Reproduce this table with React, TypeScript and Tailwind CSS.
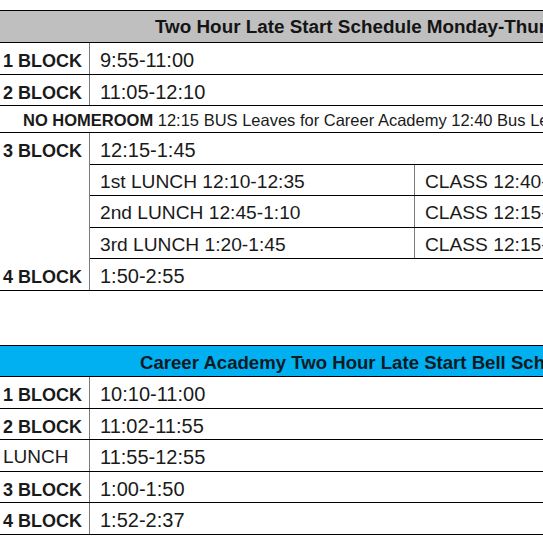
import React from "react";

const font = "font-['Liberation_Sans',Arial,sans-serif]";

function Row({ label, bold = true, time }: { label: string; bold?: boolean; time: string }) {
  return (
    <div className="flex h-[31.5px] border-b border-black">
      <div
        className={`w-[90px] shrink-0 border-r border-[#7a7a7a] pl-[3px] leading-[22px] whitespace-nowrap ${
          bold ? "font-bold text-[18px] pt-[7px]" : "text-[19px] pt-[6px]"
        }`}
      >
        {label}
      </div>
      <div className="pl-[10px] pt-[6px] leading-[22px] text-[20px] whitespace-nowrap">{time}</div>
    </div>
  );
}

function LunchRow({ a, b }: { a: string; b: string }) {
  return (
    <div className="flex h-[31.5px] border-b border-black">
      <div className="w-[325px] shrink-0 border-r border-[#7a7a7a] pl-[10px] pt-[6px] leading-[22px] text-[19.2px] whitespace-nowrap">
        {a}
      </div>
      <div className="pl-[10px] pt-[6px] leading-[22px] text-[19.2px] whitespace-nowrap">{b}</div>
    </div>
  );
}

export default function App() {
  return (
    <div className={`w-[543px] h-[543px] overflow-hidden bg-white text-[#1a1a1a] ${font}`}>
      <div className="pt-[10px]">
        {/* Table 1 */}
        <div className="border-t border-black w-[760px]">
          <div className="h-[32px] border-b border-black bg-[#bfbfbf] pl-[155px] pt-[5px] leading-[22px] text-[18.85px] font-bold whitespace-nowrap text-[#141414]">
            Two Hour Late Start Schedule Monday-Thursday
          </div>
          <Row label="1 BLOCK" time="9:55-11:00" />
          <Row label="2 BLOCK" time="11:05-12:10" />
          <div className="h-[27px] border-b border-black pl-[23px] pt-[5px] leading-[18px] text-[16.5px] whitespace-nowrap">
            <span className="font-bold">NO HOMEROOM</span> 12:15 BUS Leaves for Career Academy 12:40 Bus Leaves for Home
          </div>
          <div className="flex">
            <div className="w-[90px] shrink-0 border-r border-[#7a7a7a] pl-[3px] pt-[7px] leading-[22px] text-[18px] font-bold whitespace-nowrap">
              3 BLOCK
            </div>
            <div className="flex-1 flex flex-col">
              <div className="h-[31.5px] border-b border-black pl-[10px] pt-[6px] leading-[22px] text-[20px]">12:15-1:45</div>
              <LunchRow a="1st LUNCH 12:10-12:35" b="CLASS 12:40-1:45" />
              <LunchRow a="2nd LUNCH 12:45-1:10" b="CLASS 12:15-12:45" />
              <LunchRow a="3rd LUNCH 1:20-1:45" b="CLASS 12:15-1:20" />
            </div>
          </div>
          <Row label="4 BLOCK" time="1:50-2:55" />
        </div>

        {/* Table 2 */}
        <div className="mt-[54.5px] border-t border-black w-[760px]">
          <div className="h-[31px] border-b border-black bg-[#00b0f0] pl-[140px] pt-[6px] leading-[22px] text-[18.6px] font-bold whitespace-nowrap text-[#0f1a24]">
            Career Academy Two Hour Late Start Bell Schedule
          </div>
          <Row label="1 BLOCK" time="10:10-11:00" />
          <Row label="2 BLOCK" time="11:02-11:55" />
          <Row label="LUNCH" bold={false} time="11:55-12:55" />
          <Row label="3 BLOCK" time="1:00-1:50" />
          <Row label="4 BLOCK" time="1:52-2:37" />
        </div>
      </div>
    </div>
  );
}
